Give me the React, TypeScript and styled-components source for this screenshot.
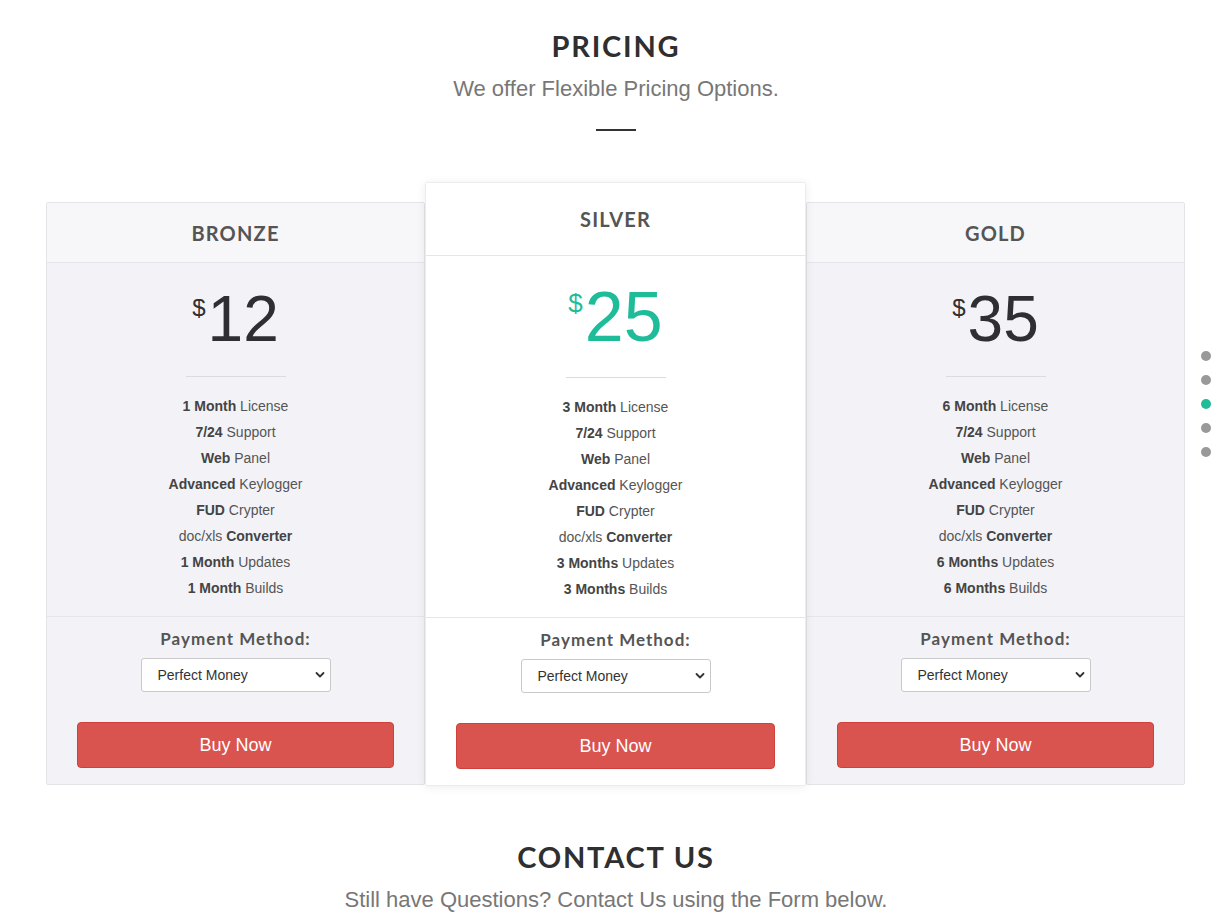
import React from "react";
import styled, { createGlobalStyle } from "styled-components";

const GlobalStyle = createGlobalStyle`
  html, body { margin: 0; padding: 0; background: #fff; }
  body { font-family: "Liberation Sans", Arial, sans-serif; color: #555; }
  * { box-sizing: border-box; }
`;

const Page = styled.div`
  position: relative;
  width: 1224px;
  min-height: 923px;
  overflow: hidden;
`;

const Section = styled.section<{ $top: number }>`
  display: flex;
  flex-direction: column;
  align-items: center;
  padding-top: ${(p) => p.$top}px;
  padding-left: 8px;
`;

const Heading = styled.h2`
  margin: 0;
  font-family: "Lato", "Open Sans", sans-serif;
  font-weight: 700;
  font-size: 29px;
  line-height: 36px;
  letter-spacing: 1.8px;
  color: #2f2f2f;
`;

const Sub = styled.p`
  margin: 12px 0 0;
  font-family: "Liberation Sans", Arial, sans-serif;
  font-size: 22px;
  line-height: 26px;
  color: #777;
`;

const Rule = styled.div`
  width: 40px;
  height: 2px;
  background: #333;
  margin-top: 27px;
`;

const Cards = styled.div`
  display: grid;
  grid-template-columns: 379px 381px 379px;
  align-items: start;
  margin: 51px 0 0 46px;
  width: 1139px;
`;

const Card = styled.div<{ $featured?: boolean }>`
  position: relative;
  z-index: ${(p) => (p.$featured ? 2 : 1)};
  margin-top: ${(p) => (p.$featured ? 0 : 20)}px;
  background: ${(p) => (p.$featured ? "#fff" : "#f3f3f7")};
  border: 1px solid ${(p) => (p.$featured ? "#ececf0" : "#e3e3e8")};
  border-radius: 2px;
  box-shadow: ${(p) => (p.$featured ? "0 1px 10px rgba(0,0,0,0.08)" : "none")};
  display: flex;
  flex-direction: column;
`;

const Header = styled.div<{ $featured?: boolean }>`
  height: ${(p) => (p.$featured ? 73 : 60)}px;
  display: flex;
  align-items: center;
  justify-content: center;
  background: ${(p) => (p.$featured ? "#fff" : "#f7f7fa")};
  border-bottom: 1px solid #e6e6ea;
`;

const PlanName = styled.h3`
  margin: 0;
  font-family: "Lato", "Open Sans", sans-serif;
  font-weight: 700;
  font-size: 20px;
  letter-spacing: 1.2px;
  color: #555;
`;

const Body = styled.div<{ $featured?: boolean }>`
  display: flex;
  flex-direction: column;
  align-items: center;
  padding: ${(p) => (p.$featured ? 21 : 16)}px 0 15px;
  border-bottom: 1px solid #e6e6ea;
`;

const Price = styled.div<{ $featured?: boolean }>`
  display: flex;
  align-items: flex-start;
  height: 80px;
  color: ${(p) => (p.$featured ? "#1fbc9a" : "#2f2f33")};
  margin-bottom: ${(p) => (p.$featured ? 20 : 17)}px;
`;

const Currency = styled.span<{ $featured?: boolean }>`
  font-size: ${(p) => (p.$featured ? 26 : 24)}px;
  line-height: 30px;
  margin-top: ${(p) => (p.$featured ? 11 : 14)}px;
  margin-right: 2px;
`;

const Amount = styled.span<{ $featured?: boolean }>`
  font-size: ${(p) => (p.$featured ? 70 : 64)}px;
  line-height: 80px;
`;

const SmallRule = styled.div`
  width: 100px;
  height: 1px;
  background: #dcdce0;
  margin-bottom: 16px;
`;

const Features = styled.ul`
  list-style: none;
  margin: 0;
  padding: 0;
  text-align: center;
`;

const Feature = styled.li`
  font-size: 14px;
  line-height: 26px;
  color: #555;
  b { color: #444; font-weight: 700; }
`;

const Footer = styled.div`
  display: flex;
  flex-direction: column;
  align-items: center;
  padding: 11px 30px 16px;
`;

const PayLabel = styled.div`
  font-family: "Lato", "Open Sans", sans-serif;
  font-weight: 700;
  font-size: 17px;
  line-height: 22px;
  letter-spacing: 1px;
  color: #555;
`;

const SelectWrap = styled.div`
  position: relative;
  width: 190px;
  height: 34px;
  margin-top: 8px;
`;

const Select = styled.select`
  appearance: none;
  width: 100%;
  height: 100%;
  border: 1px solid #c9c9cc;
  border-radius: 3px;
  background: #fff;
  padding: 0 24px 0 16px;
  font-family: "Liberation Sans", Arial, sans-serif;
  font-size: 14px;
  color: #333;
`;

const Chevron = styled.svg`
  position: absolute;
  right: 6px;
  top: 13px;
  pointer-events: none;
`;

const BuyButton = styled.button`
  width: 100%;
  height: 46px;
  margin-top: 30px;
  border: 1px solid #d0413d;
  border-radius: 4px;
  background: #d9534f;
  color: #fff;
  font-family: "Liberation Sans", Arial, sans-serif;
  font-size: 18px;
  cursor: pointer;
`;

const DotNav = styled.nav`
  position: absolute;
  right: 13px;
  top: 351px;
  display: flex;
  flex-direction: column;
  gap: 14px;
`;

const Dot = styled.span<{ $active?: boolean }>`
  width: 10px;
  height: 10px;
  border-radius: 50%;
  background: ${(p) => (p.$active ? "#1fbc9a" : "#999")};
`;

type Plan = {
  name: string;
  price: string;
  months: string;
  featured?: boolean;
};

const plans: Plan[] = [
  { name: "BRONZE", price: "12", months: "1 Month" },
  { name: "SILVER", price: "25", months: "3 Months", featured: true },
  { name: "GOLD", price: "35", months: "6 Months" },
];

function PlanCard({ plan }: { plan: Plan }) {
  const f = plan.featured;
  const license = plan.months.replace("Months", "Month");
  return (
    <Card $featured={f}>
      <Header $featured={f}>
        <PlanName>{plan.name}</PlanName>
      </Header>
      <Body $featured={f}>
        <Price $featured={f}>
          <Currency $featured={f}>$</Currency>
          <Amount $featured={f}>{plan.price}</Amount>
        </Price>
        <SmallRule />
        <Features>
          <Feature><b>{license}</b> License</Feature>
          <Feature><b>7/24</b> Support</Feature>
          <Feature><b>Web</b> Panel</Feature>
          <Feature><b>Advanced</b> Keylogger</Feature>
          <Feature><b>FUD</b> Crypter</Feature>
          <Feature>doc/xls <b>Converter</b></Feature>
          <Feature><b>{plan.months}</b> Updates</Feature>
          <Feature><b>{plan.months}</b> Builds</Feature>
        </Features>
      </Body>
      <Footer>
        <PayLabel>Payment Method:</PayLabel>
        <SelectWrap>
          <Select defaultValue="pm">
            <option value="pm">Perfect Money</option>
            <option value="btc">Bitcoin</option>
          </Select>
          <Chevron width="10" height="8" viewBox="0 0 10 8">
            <path d="M1.5 2 L5 5.5 L8.5 2" fill="none" stroke="#333" strokeWidth="1.8" strokeLinecap="round" strokeLinejoin="round" />
          </Chevron>
        </SelectWrap>
        <BuyButton>Buy Now</BuyButton>
      </Footer>
    </Card>
  );
}

export default function App() {
  return (
    <Page>
      <GlobalStyle />
      <Section $top={28}>
        <Heading>PRICING</Heading>
        <Sub>We offer Flexible Pricing Options.</Sub>
        <Rule />
      </Section>
      <Cards>
        {plans.map((p) => (
          <PlanCard key={p.name} plan={p} />
        ))}
      </Cards>
      <Section $top={53}>
        <Heading>CONTACT US</Heading>
        <Sub>Still have Questions? Contact Us using the Form below.</Sub>
      </Section>
      <DotNav>
        <Dot />
        <Dot />
        <Dot $active />
        <Dot />
        <Dot />
      </DotNav>
    </Page>
  );
}
